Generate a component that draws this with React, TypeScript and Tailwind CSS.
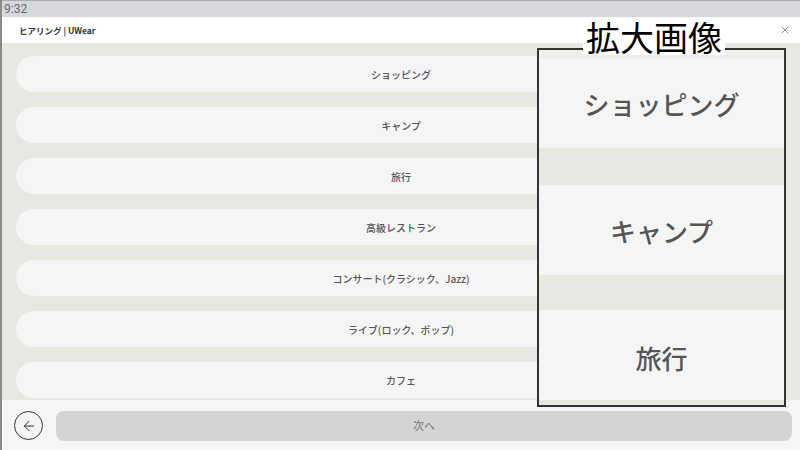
import React from "react";
import { ArrowLeft, X } from "lucide-react";

const items = [
  "ショッピング",
  "キャンプ",
  "旅行",
  "高級レストラン",
  "コンサート(クラシック、Jazz)",
  "ライブ(ロック、ポップ)",
  "カフェ",
];

const font = { fontFamily: '"Noto Sans CJK JP", "Noto Sans", sans-serif' };

export default function App() {
  return (
    <div
      className="relative w-[800px] h-[450px] overflow-hidden flex flex-col border-l-2 border-[#8a8a8a] bg-[#f5f5f5]"
      style={font}
    >
      <div className="h-[17px] shrink-0 bg-[#d5d7da] border-t border-[#a9abae] flex items-center pl-[2px]">
        <span className="text-[12px] leading-none text-[#6b6b6b]" style={{ fontFamily: "Roboto, sans-serif" }}>9:32</span>
      </div>
      <div className="h-[26px] shrink-0 bg-white flex items-center justify-between pl-[17px] pr-[9px]">
        <span className="text-[8.5px] font-bold text-[#333]">ヒアリング | UWear</span>
        <X size={12} strokeWidth={1.5} className="text-[#666]" />
      </div>
      <div className="h-[357px] shrink-0 bg-[#e8e7e1] pt-[13px] px-[14px] flex flex-col gap-[15px] overflow-hidden">
        {items.map((t) => (
          <div
            key={t}
            className="h-[36px] shrink-0 rounded-[18px] bg-[#f5f5f5] flex items-center justify-center text-[10px] font-medium text-[#555]"
          >
            {t}
          </div>
        ))}
      </div>
      <div className="flex-1 bg-[#f5f5f5] flex items-center pl-[12px] pr-[8px] pt-[1px]">
        <div className="w-[29px] h-[29px] rounded-full border-[1.5px] border-[#333] flex items-center justify-center shrink-0">
          <ArrowLeft size={16} strokeWidth={1.5} className="text-[#333]" />
        </div>
        <div className="ml-[13px] flex-1 h-[30px] rounded-[8px] bg-[#d4d4d4] flex items-center justify-center text-[11px] text-[#777]">
          次へ
        </div>
      </div>

      <div className="absolute left-[535px] top-[48px] w-[249px] h-[359px] border-2 border-[#333] bg-[#e8e7e1] overflow-hidden flex flex-col">
        <div className="h-[8px] shrink-0 bg-[#efeeea]" />
        <div className="h-[90px] shrink-0 bg-[#f5f5f5] flex items-center justify-center text-[26px] font-medium text-[#555]">
          ショッピング
        </div>
        <div className="h-[37px] shrink-0" />
        <div className="h-[90px] shrink-0 bg-[#f5f5f5] flex items-center justify-center text-[26px] font-medium text-[#555]">
          キャンプ
        </div>
        <div className="h-[35px] shrink-0" />
        <div className="h-[90px] shrink-0 bg-[#f5f5f5] flex items-center justify-center text-[26px] font-medium text-[#555] pt-[4px]">
          旅行
        </div>
      </div>

      <div className="absolute left-[581px] top-[19px] bg-white px-[3px] text-[34px] leading-[36px] text-black">
        拡大画像
      </div>
    </div>
  );
}
